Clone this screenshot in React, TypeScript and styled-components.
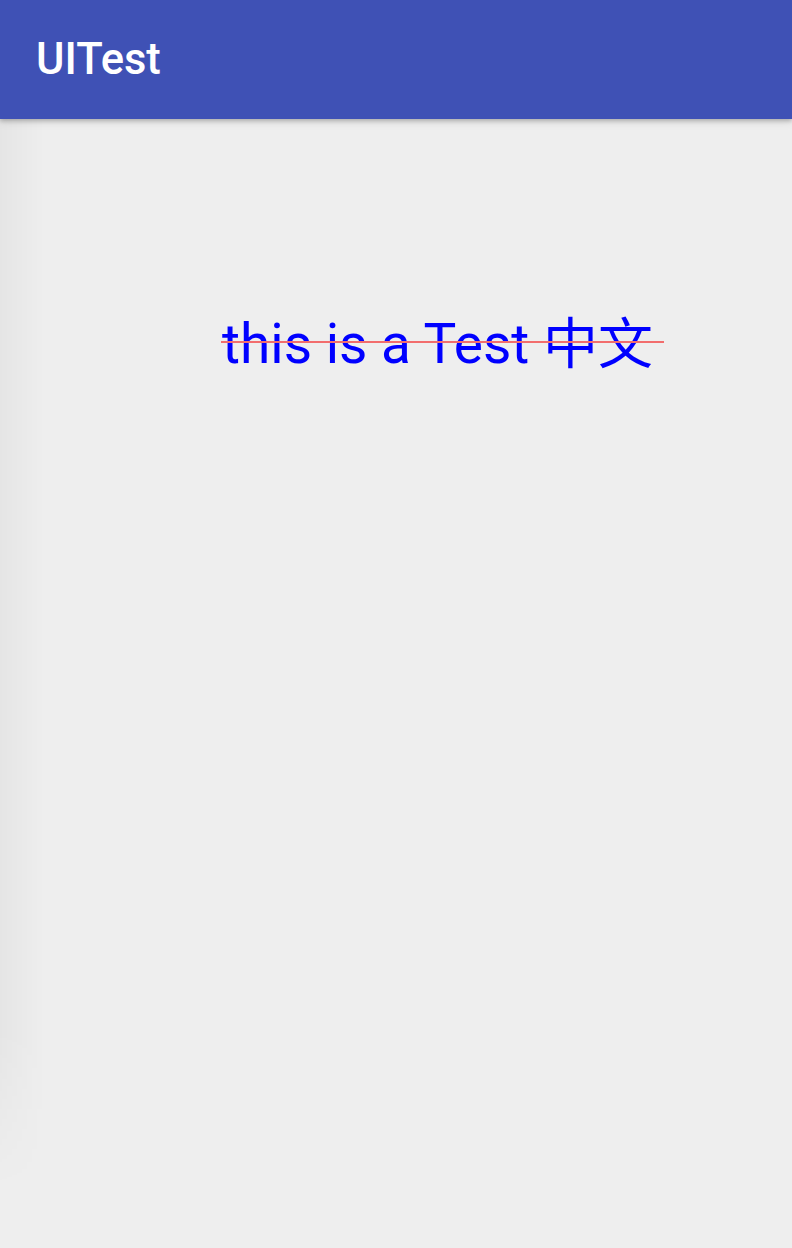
import React from "react";
import styled, { createGlobalStyle } from "styled-components";

const Global = createGlobalStyle`
  html, body { margin: 0; padding: 0; background: #eeeeee; }
  body { font-family: Roboto, "Noto Sans CJK SC", sans-serif; }
`;

const Screen = styled.div`
  position: relative;
  width: 792px;
  height: 1248px;
  background: #eeeeee;
  overflow: hidden;
  display: flex;
  flex-direction: column;
`;

const AppBar = styled.header`
  position: relative;
  z-index: 2;
  height: 119px;
  flex: 0 0 119px;
  background: #3f51b5;
  box-shadow: 0 2px 4px rgba(0, 0, 0, 0.22), 0 4px 8px rgba(0, 0, 0, 0.08);
  display: flex;
  align-items: center;
  padding-left: 36px;
`;

const Title = styled.h1`
  margin: 0;
  color: #ffffff;
  font-family: Roboto, sans-serif;
  font-weight: 500;
  font-size: 43.5px;
  line-height: 1;
  margin-top: 0px;
`;

const Content = styled.main`
  position: relative;
  flex: 1;
  padding: 192px 0 0 222px;
`;

const EdgeShade = styled.div`
  position: absolute;
  left: 0;
  top: 0;
  width: 44px;
  height: 1070px;
  background: linear-gradient(to right, rgba(0, 0, 0, 0.035), rgba(0, 0, 0, 0));
  -webkit-mask-image: linear-gradient(to bottom, #000 85%, transparent);
  mask-image: linear-gradient(to bottom, #000 85%, transparent);
  pointer-events: none;
`;

const Label = styled.span`
  position: relative;
  display: inline-block;
  color: #0000ff;
  font-family: Roboto, "Noto Sans CJK SC", sans-serif;
  font-size: 55px;
  line-height: 66px;
  white-space: nowrap;
  padding-right: 11px;

  &::after {
    content: "";
    position: absolute;
    left: -1px;
    right: 0;
    top: 30px;
    height: 2px;
    background: #f26d6d;
  }
`;

export default function App() {
  return (
    <>
      <Global />
      <Screen>
        <AppBar>
          <Title>UITest</Title>
        </AppBar>
        <Content>
          <EdgeShade />
          <Label>this is a Test 中文</Label>
        </Content>
      </Screen>
    </>
  );
}
